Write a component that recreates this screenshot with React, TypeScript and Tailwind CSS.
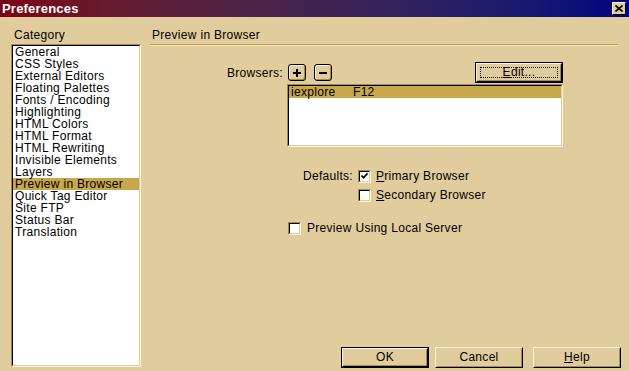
import type { ReactNode } from 'react';

const categories = [
  'General',
  'CSS Styles',
  'External Editors',
  'Floating Palettes',
  'Fonts / Encoding',
  'Highlighting',
  'HTML Colors',
  'HTML Format',
  'HTML Rewriting',
  'Invisible Elements',
  'Layers',
  'Preview in Browser',
  'Quick Tag Editor',
  'Site FTP',
  'Status Bar',
  'Translation',
];

function Sunken({ className, children }: { className?: string; children?: ReactNode }) {
  return (
    <div className={`border border-t-[#a88c44] border-l-[#a88c44] border-b-[#fcf4dc] border-r-[#fcf4dc] ${className ?? ''}`}>
      <div className="h-full w-full border border-t-black border-l-black border-b-[#e0cc9c] border-r-[#e0cc9c] bg-white overflow-hidden">
        {children}
      </div>
    </div>
  );
}

function Button({ children, isDefault, focus, className }: { children: ReactNode; isDefault?: boolean; focus?: boolean; className?: string }) {
  return (
    <div className={`h-[21px] ${isDefault ? 'border border-black' : ''} ${className ?? ''}`}>
      <div className="h-full w-full border border-t-[#fcf4dc] border-l-[#fcf4dc] border-b-black border-r-black">
        <div className="h-full w-full border border-t-[#e0cc9c] border-l-[#e0cc9c] border-b-[#a88c44] border-r-[#a88c44] flex items-center justify-center p-[2px]">
          <div className={`h-full w-full flex items-center justify-center leading-[13px] ${focus ? 'border border-dotted border-black' : ''}`}>
            {children}
          </div>
        </div>
      </div>
    </div>
  );
}

function Checkbox({ checked }: { checked?: boolean }) {
  return (
    <Sunken className="w-[13px] h-[13px] shrink-0">
      {checked && (
        <svg width="9" height="9" viewBox="0 0 9 9" className="block">
          <polyline points="1.5,3.5 3.5,5.8 7.6,1.4" fill="none" stroke="black" strokeWidth="1.7" />
        </svg>
      )}
    </Sunken>
  );
}

function SmallBtn({ minus }: { minus?: boolean }) {
  return (
    <div className="w-[18px] h-[17px] rounded-[3px] border border-black bg-[#e0cc9c] shadow-[inset_1px_1px_0_#fcf4dc,inset_-1px_-1px_0_#a88c44] flex items-center justify-center">
      <svg width="10" height="10" viewBox="0 0 10 10">
        <rect x="1" y="4" width="8" height="2" fill="black" />
        {!minus && <rect x="4" y="1" width="2" height="8" fill="black" />}
      </svg>
    </div>
  );
}

export default function App() {
  return (
    <div className="w-[629px] h-[371px] bg-[#e0cc9c] font-['Liberation_Sans',Arial,sans-serif] text-[12px] tracking-[0.3px] text-black overflow-hidden flex flex-col">
      {/* Title bar */}
      <div className="h-[17px] shrink-0 bg-linear-to-r from-[#7a0012] to-[#000080] flex items-center justify-between pl-[2px] pr-[3px]">
        <span className="text-white font-bold text-[13px] leading-[16px] tracking-[0.2px]">Preferences</span>
        <div className="w-[14px] h-[13px] border border-t-[#fcf4dc] border-l-[#fcf4dc] border-b-black border-r-black bg-[#e0cc9c] flex items-center justify-center">
          <svg width="8" height="7" viewBox="0 0 8 7">
            <path d="M0.5 0.5 L7.5 6.5 M7.5 0.5 L0.5 6.5" stroke="black" strokeWidth="1.6" />
          </svg>
        </div>
      </div>

      <div className="flex flex-1 pt-[11px]">
        {/* Category column */}
        <div className="ml-[11px] w-[130px] flex flex-col pb-[4px]">
          <div className="h-[16px] pl-[3px] leading-[14px]">Category</div>
          <Sunken className="flex-1">
            {categories.map((c) => (
              <div
                key={c}
                className={`h-[12px] leading-[12px] pl-[2px] whitespace-nowrap ${c === 'Preview in Browser' ? 'bg-[#c8a84a]' : ''}`}
              >
                {c}
              </div>
            ))}
          </Sunken>
        </div>

        {/* Panel */}
        <div className="ml-[9px] w-[471px] flex flex-col pb-[3px]">
          <div className="h-[16px] pl-[2px] leading-[14px]">Preview in Browser</div>
          <div className="h-px w-[468px] bg-[#c0a040]" />
          <div className="h-px w-[468px] bg-[#f0e4c0]" />

          {/* Browsers row */}
          <div className="mt-[16px] h-[21px] flex items-center">
            <div className="w-[133px] text-right">Browsers:</div>
            <div className="ml-[5px]">
              <SmallBtn />
            </div>
            <div className="ml-[8px]">
              <SmallBtn minus />
            </div>
            <Button isDefault focus className="ml-[143px] w-[88px]">
              <span>
                <span className="underline">E</span>dit...
              </span>
            </Button>
          </div>

          <Sunken className="mt-[1px] ml-[137px] w-[276px] h-[63px]">
            <div className="h-[12px] leading-[12px] bg-[#c8a84a] pl-[2px] flex">
              <span className="w-[62px]">iexplore</span>
              <span>F12</span>
            </div>
          </Sunken>

          {/* Defaults */}
          <div className="mt-[23px] h-[13px] flex items-center leading-[13px]">
            <div className="w-[203px] text-right">Defaults:</div>
            <div className="ml-[5px]">
              <Checkbox checked />
            </div>
            <span className="ml-[5px]">
              <span className="underline">P</span>rimary Browser
            </span>
          </div>
          <div className="mt-[6px] h-[13px] flex items-center leading-[13px]">
            <div className="ml-[208px]">
              <Checkbox />
            </div>
            <span className="ml-[5px]">
              <span className="underline">S</span>econdary Browser
            </span>
          </div>

          <div className="mt-[20px] h-[13px] flex items-center leading-[13px]">
            <div className="ml-[138px]">
              <Checkbox />
            </div>
            <span className="ml-[6px]">Preview Using Local Server</span>
          </div>

          {/* Dialog buttons */}
          <div className="mt-auto flex">
            <Button isDefault className="ml-[191px] w-[88px]">OK</Button>
            <Button className="ml-[6px] w-[88px]">Cancel</Button>
            <Button className="ml-[10px] w-[88px]">
              <span>
                <span className="underline">H</span>elp
              </span>
            </Button>
          </div>
        </div>
      </div>
    </div>
  );
}
